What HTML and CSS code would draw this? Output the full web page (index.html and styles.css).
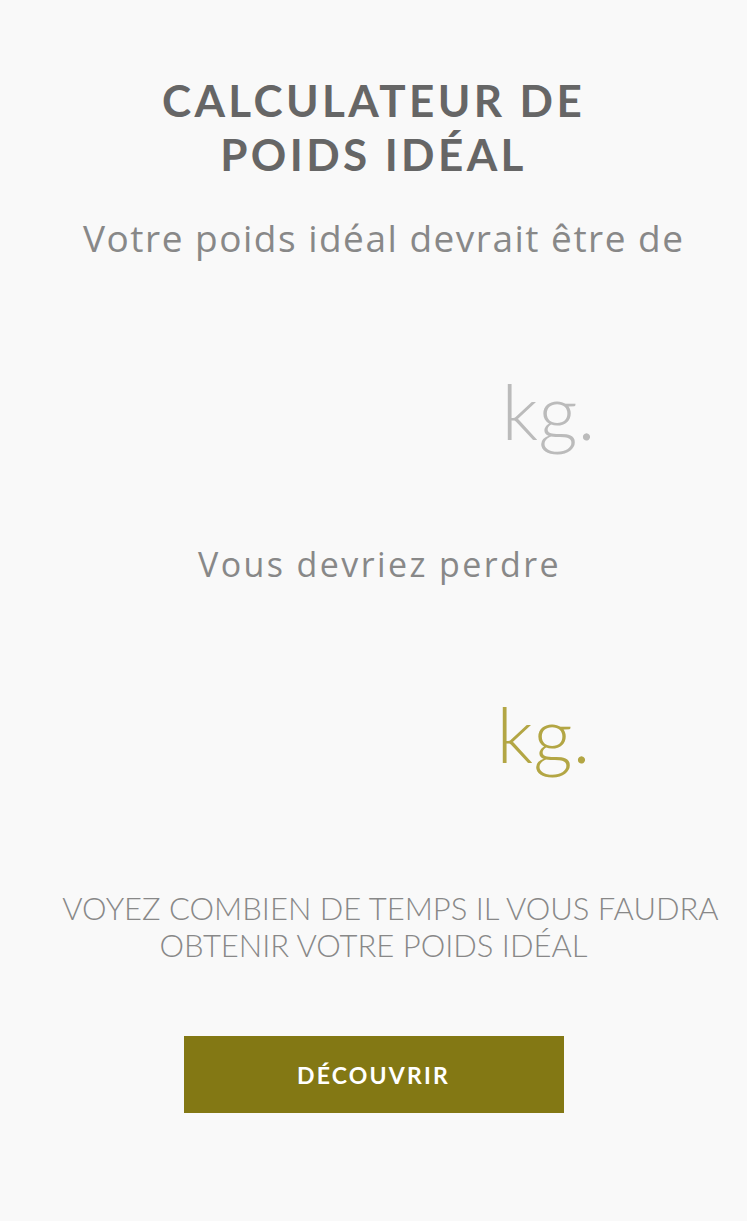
FILE: index.html
```html
<!DOCTYPE html>
<html lang="fr">
<head>
<meta charset="utf-8">
<title>Calculateur de poids idéal</title>
<link rel="stylesheet" href="styles.css">
</head>
<body>
<main class="calc">
  <h1 class="title">CALCULATEUR DE<br>POIDS IDÉAL</h1>
  <div class="ideal-label">Votre poids idéal devrait être de</div>
  <div class="result result-ideal">
    <span class="value"></span>
    <span class="unit">kg.</span>
  </div>
  <p class="lose-label">Vous devriez perdre</p>
  <div class="result result-lose">
    <span class="value"></span>
    <span class="unit">kg.</span>
  </div>
  <p class="cta-text"><span class="cta-line1">VOYEZ COMBIEN DE TEMPS IL VOUS FAUDRA</span><br>OBTENIR VOTRE POIDS IDÉAL</p>
  <a class="btn" href="#">DÉCOUVRIR</a>
</main>
</body>
</html>
```

FILE: styles.css
```css
html, body {
  margin: 0;
  padding: 0;
  background: #f9f9f9;
}

body {
  font-family: Lato, "Open Sans", sans-serif;
  color: #888;
}

.calc {
  display: flex;
  flex-direction: column;
  align-items: center;
  padding-top: 73px;
  min-height: 1221px;
  box-sizing: border-box;
}

.title {
  margin: 0;
  font-size: 44px;
  line-height: 54px;
  font-weight: 700;
  letter-spacing: 3.4px;
  color: #666;
  text-align: center;
}

.ideal-label {
  align-self: flex-start;
  margin: 34px 0 0 83px;
  white-space: nowrap;
  font-family: "Open Sans", Lato, sans-serif;
  font-size: 37px;
  line-height: 46px;
  font-weight: 400;
  letter-spacing: 1.5px;
  color: #888;
}

.result {
  display: flex;
  justify-content: center;
  align-items: baseline;
  width: 100%;
}

.result .value {
  width: 350px;
}

.unit {
  font-size: 77px;
  line-height: 90px;
  font-weight: 300;
}

.result-ideal {
  margin-top: 104px;
  color: #bbb;
}

.lose-label {
  margin: 88px 0 0 12px;
  font-family: "Open Sans", Lato, sans-serif;
  font-size: 34px;
  line-height: 42px;
  letter-spacing: 2.4px;
  color: #888;
}

.result-lose {
  margin-top: 103px;
  color: #b3a644;
}

.result-lose .value {
  width: 340px;
}

.cta-text {
  margin: 112px 0 0;
  font-size: 31px;
  line-height: 37px;
  font-weight: 300;
  color: #888;
  text-align: center;
}

.cta-line1 {
  padding-left: 34px;
}

.btn {
  display: flex;
  align-items: center;
  justify-content: center;
  margin-top: 72px;
  width: 380px;
  height: 77px;
  background: #837814;
  color: #fff;
  font-size: 23px;
  font-weight: 700;
  letter-spacing: 2.2px;
  text-decoration: none;
}
```
